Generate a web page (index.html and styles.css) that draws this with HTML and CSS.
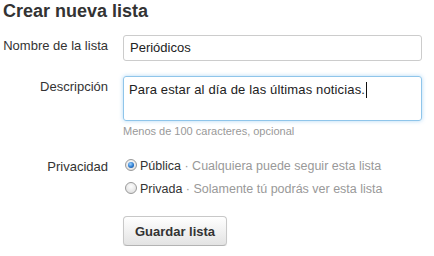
FILE: index.html
```html
<!DOCTYPE html>
<html lang="es">
<head>
<meta charset="utf-8">
<title>Crear nueva lista</title>
<link rel="stylesheet" href="styles.css">
</head>
<body>
<div class="page">
  <h2 class="title">Crear nueva lista</h2>
  <div class="row row-name">
    <label class="label">Nombre de la lista</label>
    <div class="field">
      <div class="input">Periódicos</div>
    </div>
  </div>
  <div class="row row-desc">
    <label class="label">Descripción</label>
    <div class="field">
      <div class="textarea">Para estar al día de las últimas noticias.<span class="caret"></span></div>
      <div class="hint">Menos de 100 caracteres, opcional</div>
    </div>
  </div>
  <div class="row row-privacy">
    <label class="label label-privacy">Privacidad</label>
    <div class="field">
      <div class="option"><span class="radio checked"></span>Pública<span class="desc"> · Cualquiera puede seguir esta lista</span></div>
      <div class="option"><span class="radio"></span>Privada<span class="desc"> · Solamente tú podrás ver esta lista</span></div>
    </div>
  </div>
  <div class="row row-submit">
    <div class="label"></div>
    <div class="field">
      <button class="button" type="button">Guardar lista</button>
    </div>
  </div>
</div>
</body>
</html>
```
FILE: styles.css
```css
* { box-sizing: border-box; }
html, body { margin: 0; padding: 0; background: #fff; }
body {
  font-family: "Liberation Sans", Arial, sans-serif;
  font-size: 13px;
  color: #333;
}
.page { width: 422px; }
.title {
  margin: 0 0 13px;
  padding-left: 3px;
  font-size: 18px;
  line-height: 22px;
  font-weight: bold;
  color: #333;
}
.row { display: flex; align-items: flex-start; }
.label {
  flex: 0 0 108px;
  text-align: right;
  line-height: 16px;
  padding-top: 3px;
  color: #333;
}
.field { flex: 0 0 299px; margin-left: 15px; }
.row-name { margin-bottom: 15px; }
.input {
  height: 26px;
  border: 1px solid #ccc;
  border-radius: 3px;
  padding: 0 6px;
  line-height: 24px;
  color: #222;
}
.textarea {
  height: 45px;
  border: 1px solid #8fc5ea;
  border-radius: 3px;
  padding: 5px 5px 0;
  line-height: 16px;
  letter-spacing: 0.15px;
  color: #222;
  box-shadow: 0 0 4px rgba(82, 168, 236, 0.45);
}
.caret {
  display: inline-block;
  width: 1px;
  height: 16px;
  background: #111;
  vertical-align: -4px;
  margin-left: 1px;
}
.hint {
  margin-top: 3px;
  font-size: 11px;
  line-height: 14px;
  color: #999;
}
.row-privacy { margin-top: 17px; }
.label-privacy { line-height: 23px; padding-top: 0; }
.option { line-height: 23px; font-size: 12.5px; color: #333; }
.desc { color: #999; }
.radio {
  display: inline-block;
  width: 12px;
  height: 12px;
  margin: 0 3px 0 2px;
  border-radius: 50%;
  border: 1px solid #9a9a9a;
  background: radial-gradient(circle at 50% 35%, #fdfdfd 0%, #e4e4e4 70%, #cfcfcf 100%);
  vertical-align: -1px;
  position: relative;
}
.radio.checked::after {
  content: "";
  position: absolute;
  left: 2px;
  top: 2px;
  width: 6px;
  height: 6px;
  border-radius: 50%;
  background: radial-gradient(circle at 40% 35%, #9fd4ff 0%, #2a7ad0 55%, #0d3f85 100%);
}
.row-submit { margin-top: 15px; }
.button {
  display: block;
  width: 104px;
  height: 30px;
  padding: 0;
  border: 1px solid #c8c8c8;
  border-bottom-color: #b3b3b3;
  border-radius: 4px;
  background: linear-gradient(#ffffff, #e3e3e3);
  box-shadow: 0 1px 1px rgba(0, 0, 0, 0.08);
  font-family: "Liberation Sans", Arial, sans-serif;
  font-size: 13px;
  font-weight: bold;
  color: #333;
  text-align: center;
}
```
